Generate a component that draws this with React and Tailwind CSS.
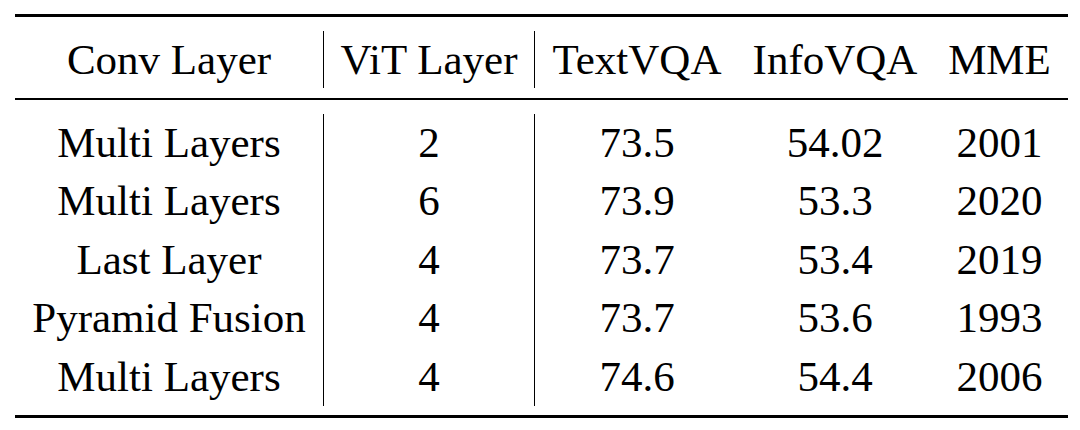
import React from 'react'

const HEAD = ['Conv Layer', 'ViT Layer', 'TextVQA', 'InfoVQA', 'MME']

const ROWS = [
  ['Multi Layers', '2', '73.5', '54.02', '2001'],
  ['Multi Layers', '6', '73.9', '53.3', '2020'],
  ['Last Layer', '4', '73.7', '53.4', '2019'],
  ['Pyramid Fusion', '4', '73.7', '53.6', '1993'],
  ['Multi Layers', '4', '74.6', '54.4', '2006'],
]

// widths per column; vertical rules on the left of the 2nd and 3rd
const COLS = [
  'w-[308px]',
  'w-[211px] border-l border-black',
  'w-[205px] border-l border-black',
  'w-[192px]',
  'w-[137px]',
]

const TXT = "font-['Liberation_Serif','Times_New_Roman',serif] text-[43px] text-center"

export default function App() {
  return (
    <div className="bg-white pt-[14px] pl-[15px] pb-[12px] text-black">
      <div className="w-[1053px]">
        <div className="h-[3px] bg-black" />

        <div className="mt-[14px] flex">
          {HEAD.map((h, i) => (
            <p key={h} className={`${COLS[i]} ${TXT} h-[57px] leading-[57px]`}>{h}</p>
          ))}
        </div>

        <div className="mt-[10px] h-[2px] bg-black" />

        <div className="mt-[14px] flex">
          {COLS.map((c, ci) => (
            <div key={ci} className={c}>
              {ROWS.map((r, ri) => (
                <p key={ri} className={`${TXT} h-[58.4px] leading-[58.4px]`}>{r[ci]}</p>
              ))}
            </div>
          ))}
        </div>

        <div className="mt-[9px] h-[3px] bg-black" />
      </div>
    </div>
  )
}
